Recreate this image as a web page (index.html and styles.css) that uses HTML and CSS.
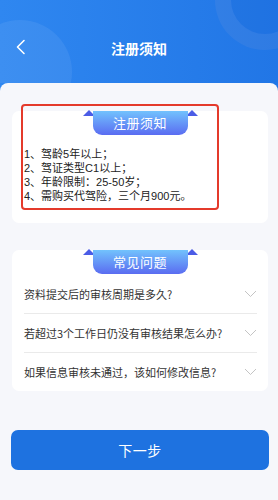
FILE: index.html
```html
<!DOCTYPE html>
<html lang="zh-CN">
<head>
    <meta charset="UTF-8">
    <meta name="viewport" content="width=device-width, initial-scale=1.0">
    <link rel="stylesheet" href="styles.css">
    <title>注册须知</title>
</head>
<body>
    <div class="app">
        <header class="topbar">
            <span class="bubble"></span>
            <span class="ring"></span>
            <a class="back" href="#">
                <svg width="10" height="16" viewBox="0 0 10 16"><path d="M8 1.5L1.5 8L8 14.5" fill="none" stroke="#fff" stroke-width="1.6" stroke-linecap="round" stroke-linejoin="round"/></svg>
            </a>
            <h1>注册须知</h1>
        </header>

        <main class="panel">
            <section class="card notice">
                <div class="ribbon">注册须知</div>
                <ol class="rules">
                    <li>1、驾龄5年以上；</li>
                    <li>2、驾证类型C1以上；</li>
                    <li>3、年龄限制：25-50岁；</li>
                    <li>4、需购买代驾险，三个月900元。</li>
                </ol>
                <div class="mark"></div>
            </section>

            <section class="card faq">
                <div class="ribbon">常见问题</div>
                <div class="faq-row">
                    <span>资料提交后的审核周期是多久?</span>
                    <svg width="13" height="8" viewBox="0 0 13 8"><path d="M1 1L6.5 6.5L12 1" fill="none" stroke="#c4c4c4" stroke-width="1"/></svg>
                </div>
                <div class="faq-row">
                    <span>若超过3个工作日仍没有审核结果怎么办?</span>
                    <svg width="13" height="8" viewBox="0 0 13 8"><path d="M1 1L6.5 6.5L12 1" fill="none" stroke="#c4c4c4" stroke-width="1"/></svg>
                </div>
                <div class="faq-row">
                    <span>如果信息审核未通过，该如何修改信息?</span>
                    <svg width="13" height="8" viewBox="0 0 13 8"><path d="M1 1L6.5 6.5L12 1" fill="none" stroke="#c4c4c4" stroke-width="1"/></svg>
                </div>
            </section>

            <button class="next">下一步</button>
        </main>
    </div>
</body>
</html>
```

FILE: styles.css
```css
body{
    margin: 0;
    padding: 0;
    font-family: "Noto Sans CJK SC", "Noto Sans", sans-serif;
    color: #333;
    background-color: #f6f7fb;
}

.app{
    width: 278px;
    height: 500px;
    overflow: hidden;
    background: linear-gradient(90deg, #2f87f0, #2176e6);
}

.topbar{
    position: relative;
    height: 83px;
    display: flex;
    align-items: center;
    justify-content: center;
    overflow: hidden;
}

.topbar h1{
    margin: 0;
    font-size: 14px;
    font-weight: bold;
    color: #fff;
    position: relative;
    top: 6px;
}

.back{
    position: absolute;
    left: 16px;
    top: 39px;
    display: flex;
}

.bubble{
    position: absolute;
    left: -32px;
    top: 20px;
    width: 104px;
    height: 104px;
    border-radius: 50%;
    background: rgba(255, 255, 255, .07);
}

.ring{
    position: absolute;
    left: 215px;
    top: -50px;
    width: 100px;
    height: 100px;
    box-sizing: border-box;
    border-radius: 50%;
    border: 16px solid rgba(255, 255, 255, .07);
    background: rgba(0, 30, 120, .04);
}

.panel{
    background-color: #f6f7fb;
    border-radius: 8px 8px 0 0;
    height: 417px;
    padding: 28px 10px 0 12px;
    box-sizing: border-box;
}

.card{
    position: relative;
    isolation: isolate;
    background: #fff;
    border-radius: 7px;
    width: 256px;
}

.ribbon{
    position: relative;
    width: 95px;
    height: 24px;
    margin: 0 auto;
    box-sizing: border-box;
    padding-top: 1px;
    border-radius: 0 0 9px 9px;
    background: linear-gradient(180deg, #72c2fd, #5a6cf1);
    color: #fff;
    font-size: 13px;
    line-height: 22px;
    text-align: center;
    letter-spacing: 0.5px;
}

.ribbon::before,
.ribbon::after{
    content: "";
    position: absolute;
    top: -1px;
    width: 0;
    height: 0;
    border-left: 6px solid transparent;
    border-right: 6px solid transparent;
    border-bottom: 6px solid #4b5ce6;
    z-index: -1;
}

.ribbon::before{ left: -10px; }
.ribbon::after{ right: -10px; }

.notice{
    height: 112px;
}

.rules{
    list-style: none;
    margin: 12px 0 0;
    padding: 0 12px;
    font-family: "Liberation Sans", "Noto Sans CJK SC", sans-serif;
    font-size: 11px;
    line-height: 14px;
    color: #222;
}

.mark{
    position: absolute;
    left: 9px;
    top: -7px;
    width: 198px;
    height: 106px;
    box-sizing: border-box;
    border: 2px solid #e43a2b;
    border-radius: 4px;
}

.faq{
    margin-top: 27px;
    height: 141px;
}

.faq-row{
    display: flex;
    align-items: center;
    justify-content: space-between;
    height: 39px;
    margin: 0 11px 0 12px;
    font-size: 11px;
    color: #333;
}

.faq-row + .faq-row{
    border-top: 1px solid #eaeaea;
    height: 38px;
}

.next{
    display: block;
    margin: 39px 0 0 -1px;
    width: 258px;
    height: 40px;
    border: 0;
    border-radius: 7px;
    background: #1e72e0;
    color: #fff;
    font-family: "Noto Sans CJK SC", sans-serif;
    font-size: 14px;
    letter-spacing: 0.5px;
}
```
